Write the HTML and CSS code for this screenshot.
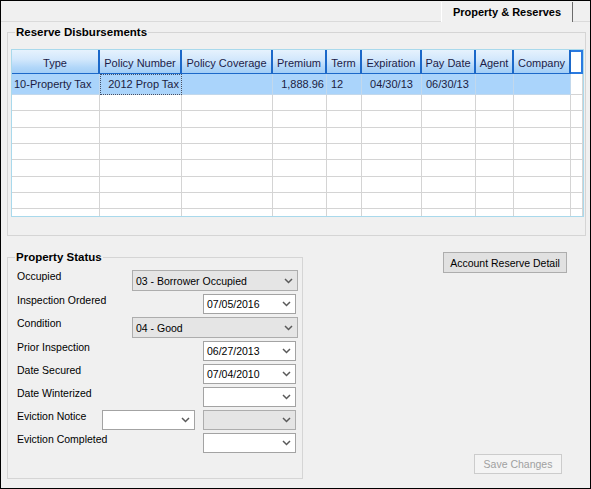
FILE: index.html
```html
<!DOCTYPE html>
<html>
<head>
<meta charset="utf-8">
<title>Property &amp; Reserves</title>
<link rel="stylesheet" href="styles.css">
</head>
<body>
<div class="window">
  <div class="tabstrip">
    <div class="tab">Property &amp; Reserves</div>
  </div>
  <div class="tabpage">
    <fieldset class="group reserves">
      <legend>Reserve Disbursements</legend>
      <div class="gridbox">
        <table class="grid">
          <colgroup>
            <col class="w-type"><col class="w-pol"><col class="w-cov"><col class="w-prem"><col class="w-term">
            <col class="w-exp"><col class="w-pay"><col class="w-agent"><col class="w-comp"><col class="w-last">
          </colgroup>
          <thead>
            <tr class="head">
              <th>Type</th><th>Policy Number</th><th>Policy Coverage</th><th>Premium</th><th>Term</th>
              <th>Expiration</th><th>Pay Date</th><th>Agent</th><th>Company</th><th class="last"></th>
            </tr>
          </thead>
          <tbody>
            <tr class="sel">
              <td class="t-left">10-Property Tax</td><td class="t-right focus">2012 Prop Tax</td><td></td>
              <td class="t-right">1,888.96</td><td class="t-term">12</td><td class="t-center">04/30/13</td>
              <td class="t-pay">06/30/13</td><td></td><td></td><td class="last"></td>
            </tr>
            <tr><td></td><td></td><td></td><td></td><td></td><td></td><td></td><td></td><td></td><td></td></tr>
            <tr><td></td><td></td><td></td><td></td><td></td><td></td><td></td><td></td><td></td><td></td></tr>
            <tr><td></td><td></td><td></td><td></td><td></td><td></td><td></td><td></td><td></td><td></td></tr>
            <tr><td></td><td></td><td></td><td></td><td></td><td></td><td></td><td></td><td></td><td></td></tr>
            <tr><td></td><td></td><td></td><td></td><td></td><td></td><td></td><td></td><td></td><td></td></tr>
            <tr><td></td><td></td><td></td><td></td><td></td><td></td><td></td><td></td><td></td><td></td></tr>
            <tr><td></td><td></td><td></td><td></td><td></td><td></td><td></td><td></td><td></td><td></td></tr>
            <tr><td></td><td></td><td></td><td></td><td></td><td></td><td></td><td></td><td></td><td></td></tr>
          </tbody>
        </table>
      </div>
    </fieldset>

    <div class="lower">
      <fieldset class="group status">
        <legend>Property Status</legend>
        <div class="form">
          <div class="row tall">
            <span class="lbl l-wide">Occupied</span>
            <div class="combo gray wide"><span>03 - Borrower Occupied</span><svg class="chev" viewBox="0 0 9 6"><path d="M1 1 L4.5 4.5 L8 1"/></svg></div>
          </div>
          <div class="row">
            <span class="lbl l-date">Inspection Ordered</span>
            <div class="combo date"><span>07/05/2016</span><svg class="chev" viewBox="0 0 9 6"><path d="M1 1 L4.5 4.5 L8 1"/></svg></div>
          </div>
          <div class="row tall">
            <span class="lbl l-wide">Condition</span>
            <div class="combo gray wide"><span>04 - Good</span><svg class="chev" viewBox="0 0 9 6"><path d="M1 1 L4.5 4.5 L8 1"/></svg></div>
          </div>
          <div class="row">
            <span class="lbl l-date">Prior Inspection</span>
            <div class="combo date"><span>06/27/2013</span><svg class="chev" viewBox="0 0 9 6"><path d="M1 1 L4.5 4.5 L8 1"/></svg></div>
          </div>
          <div class="row">
            <span class="lbl l-date">Date Secured</span>
            <div class="combo date"><span>07/04/2010</span><svg class="chev" viewBox="0 0 9 6"><path d="M1 1 L4.5 4.5 L8 1"/></svg></div>
          </div>
          <div class="row">
            <span class="lbl l-date">Date Winterized</span>
            <div class="combo date"><span></span><svg class="chev" viewBox="0 0 9 6"><path d="M1 1 L4.5 4.5 L8 1"/></svg></div>
          </div>
          <div class="row">
            <span class="lbl l-evict">Eviction Notice</span>
            <div class="combo date"><span></span><svg class="chev" viewBox="0 0 9 6"><path d="M1 1 L4.5 4.5 L8 1"/></svg></div>
            <div class="combo gray date second"><span></span><svg class="chev" viewBox="0 0 9 6"><path d="M1 1 L4.5 4.5 L8 1"/></svg></div>
          </div>
          <div class="row last-row">
            <span class="lbl l-date">Eviction Completed</span>
            <div class="combo date"><span></span><svg class="chev" viewBox="0 0 9 6"><path d="M1 1 L4.5 4.5 L8 1"/></svg></div>
          </div>
        </div>
      </fieldset>

      <div class="actions">
        <button class="btn btn-detail" type="button">Account Reserve Detail</button>
        <button class="btn btn-save" type="button" disabled>Save Changes</button>
      </div>
    </div>
  </div>
</div>
</body>
</html>
```

FILE: styles.css
```css
* { box-sizing: border-box; }

html, body {
  margin: 0;
  padding: 0;
  background: #f0f0f0;
}

body {
  font-family: "Liberation Sans", Arial, sans-serif;
  font-size: 10.5px;
  color: #000;
}

.window {
  width: 591px;
  height: 489px;
  border: 1px solid #000;
  background: #f0f0f0;
  overflow: hidden;
  display: flex;
  flex-direction: column;
}

/* ---------- tab strip ---------- */
.tabstrip {
  height: 21px;
  flex: none;
  display: flex;
  justify-content: flex-end;
  align-items: flex-end;
  border-bottom: 1px solid #dadada;
}

.tab {
  width: 132px;
  height: 20px;
  margin-right: 17px;
  margin-bottom: -1px;
  background: #f0f0f0;
  border-left: 1px solid #ffffff;
  border-right: 1px solid #6b6b6b;
  display: flex;
  align-items: center;
  justify-content: center;
  font-weight: bold;
  font-size: 11px;
  padding-bottom: 1px;
}

.tabpage {
  flex: 1;
  display: flex;
  flex-direction: column;
}

/* ---------- group boxes ---------- */
.group {
  margin: 0;
  border: 1px solid #d5d5d5;
  min-width: 0;
}

.group legend {
  padding: 0 1px;
  font-weight: bold;
  font-size: 11.5px;
  line-height: 14px;
}

.reserves {
  margin: 3px 4px 0 6px;
  padding: 0 1px 18px 3px;
}

.reserves legend { margin-left: 4px; }

/* ---------- data grid ---------- */
.gridbox {
  margin-top: 10px;
  height: 168px;
  border: 1px solid #a9d9ec;
  background: #fff;
  overflow: hidden;
}

.grid {
  border-collapse: separate;
  border-spacing: 0;
  table-layout: fixed;
  width: 571px;
  font-size: 11px;
  color: #1c1c42;
}

.w-type { width: 88px; }
.w-pol { width: 82px; }
.w-cov { width: 91px; }
.w-prem { width: 54px; }
.w-term { width: 35px; }
.w-exp { width: 60px; }
.w-pay { width: 54px; }
.w-agent { width: 38px; }
.w-comp { width: 57px; }
.w-last { width: 12px; }

.grid tr.head { height: 24px; }

.grid th {
  font-weight: normal;
  text-align: center;
  padding: 2px 0 0 0;
  white-space: nowrap;
  overflow: hidden;
  background: linear-gradient(#e6f2fd 0%, #d3e8fc 40%, #b2d7f9 75%, #a2cef6 100%);
  border-right: 2px solid #1b68c9;
  border-bottom: 1px solid #1b68c9;
  color: #1c1c48;
}

.grid th.last {
  background: #fff;
  border-left: 0;
  border-right: 2px solid #2a7ae0;
  border-top: 2px solid #2a7ae0;
  border-bottom: 2px solid #2a7ae0;
}

.grid tbody tr { height: 16.33px; }
.grid tbody tr.sel { height: 21px; }

.grid td {
  padding: 0 2px;
  border-right: 1px solid #d4d4d4;
  border-bottom: 1px solid #d4d4d4;
  white-space: nowrap;
  overflow: hidden;
}

.grid tr.sel td {
  background: #aad4fb;
  border-right-color: #c2d8ec;
  border-bottom-color: #c2d8ec;
}

.grid tr.sel td.last {
  background: #fff;
  border-right-color: #d4d4d4;
  border-bottom-color: #d4d4d4;
}

.grid td.focus {
  outline: 1px dotted #40506a;
  outline-offset: -1px;
}

.t-left { text-align: left; }
.t-right { text-align: right; }
.t-center { text-align: center; padding-right: 4px; }
.grid td.t-term { text-align: left; padding-left: 4px; }
.grid td.t-pay { text-align: left; padding-left: 4px; }

/* ---------- lower part ---------- */
.lower {
  flex: 1;
  display: flex;
}

.status {
  width: 296px;
  flex: none;
  margin: 14px 0 auto 6px;
  padding: 6px 0 25px 9px;
  align-self: flex-start;
}

.status legend { margin-left: -2px; }

.form {
  display: flex;
  flex-direction: column;
  gap: 3px;
}

.row {
  display: flex;
  align-items: flex-start;
  height: 20px;
}

.row.tall { height: 21px; }
.row.last-row { margin-top: 0; }

.lbl {
  line-height: 13px;
  white-space: nowrap;
}

.l-wide { width: 115px; }
.l-date { width: 186px; }
.l-evict { width: 85px; }

.combo {
  height: 100%;
  display: flex;
  align-items: center;
  justify-content: space-between;
  padding: 0 4px 0 3px;
  border: 1px solid #a3a3a3;
  background: #fff;
  white-space: nowrap;
}

.combo.wide { width: 166px; }
.combo.date { width: 93px; }
.combo.second { margin-left: 8px; }

.combo.gray {
  background: #e5e5e5;
  border-color: #adadad;
}

.chev {
  width: 9px;
  height: 6px;
  flex: none;
  fill: none;
  stroke: #5a5a5a;
  stroke-width: 1.5;
}

/* ---------- buttons ---------- */
.actions {
  flex: 1;
  display: flex;
  flex-direction: column;
  align-items: flex-end;
}

.btn {
  font-family: inherit;
  font-size: 10.5px;
  color: #000;
  background: #e1e1e1;
  border: 1px solid #adadad;
  border-radius: 0;
  padding: 0;
  margin: 0;
}

.btn-detail {
  width: 124px;
  height: 21px;
  margin-top: 16px;
  margin-right: 23px;
}

.btn-save {
  width: 88px;
  height: 20px;
  margin-top: auto;
  margin-right: 28px;
  margin-bottom: 14px;
  background: #f4f4f4;
  border-color: #cccccc;
  color: #a0a0a0;
}
```
